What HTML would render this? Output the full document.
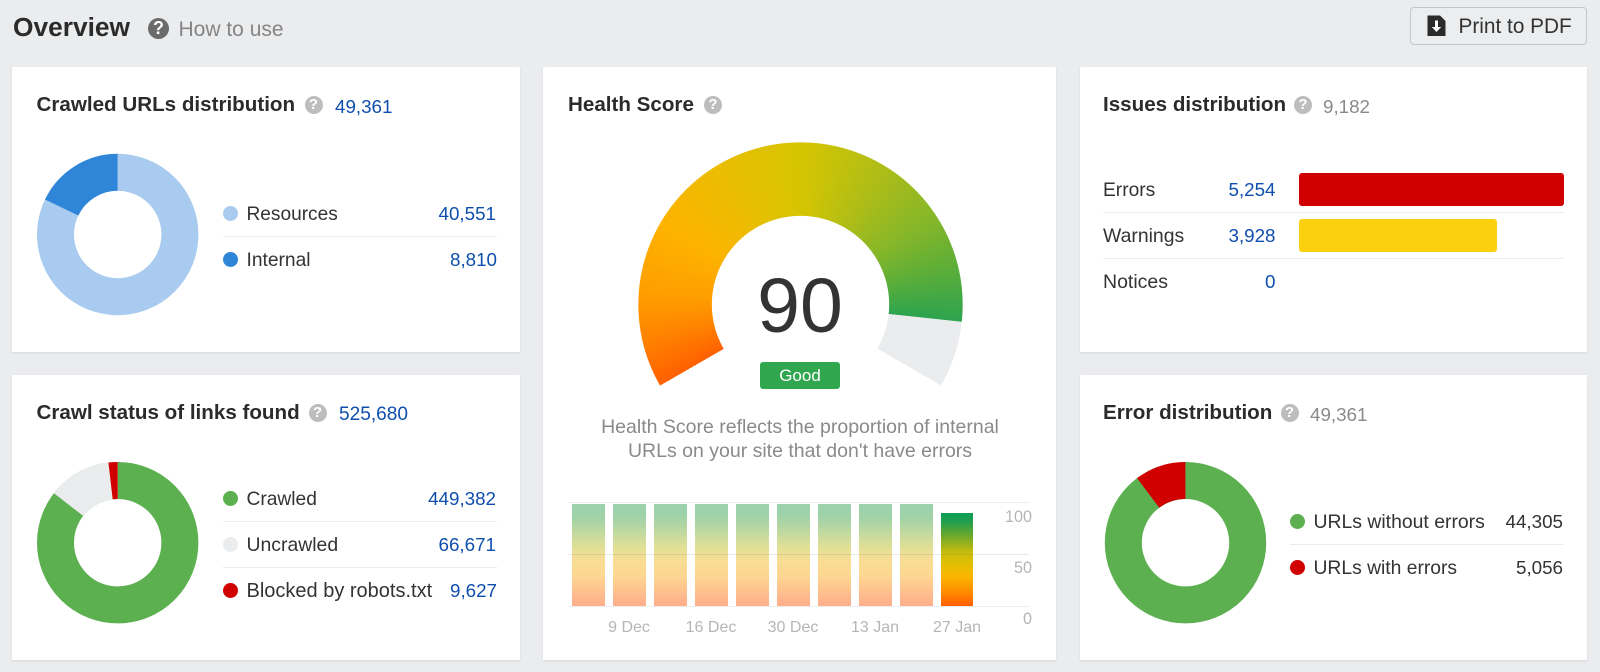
<!DOCTYPE html>
<html lang="en"><head><meta charset="utf-8"><title>Overview</title>
<style>
*{box-sizing:border-box}
html,body{margin:0;padding:0}
body{width:1600px;height:672px;background:#ebecee;position:relative;overflow:hidden;font-family:"Liberation Sans",sans-serif;color:#333;filter:blur(.3px)}
.a{position:absolute;white-space:nowrap;line-height:30px;height:30px}
.card{position:absolute;background:#fff;box-shadow:0 1px 2px rgba(0,0,0,.09)}
.t{font-weight:bold;font-size:20.6px;color:#2b2b2b}
.l{font-size:19.2px;color:#333}
.n{font-size:18.8px;color:#0e4fae;text-align:right}
.g{font-size:18.8px;color:#8a8a8a}
.k{font-size:18.8px;color:#333;text-align:right}
.q{position:absolute;width:18px;height:18px;border-radius:50%;background:#bdbdbd;color:#fff;font-weight:bold;font-size:15px;line-height:18px;text-align:center}
.d{position:absolute;width:15px;height:15px;border-radius:50%}
.ln{position:absolute;height:1px;background:#ebecee}
.bar{position:absolute;width:32.5px;top:504px;height:102.5px;background:linear-gradient(#9bd1ad 0%,#9fd2a8 12%,#e0e096 42%,#f9dd94 55%,#fdd691 70%,#feb28c 95%,#feae8a 100%)}
.x{font-size:16px;color:#b5b5b5;text-align:center;width:80px}
.y{font-size:16.2px;color:#b5b5b5;text-align:right;width:40px}
svg{position:absolute;left:0;top:0}
</style></head><body>
<div class="a" style="left:13px;top:12px;font-size:26.3px;font-weight:bold;color:#2b2b2b">Overview</div>
<div class="q" style="left:148px;top:18px;width:21px;height:21px;line-height:21px;font-size:18px;background:#6b6b6b">?</div>
<div class="a" style="left:178.500px;top:14.500px;font-size:21px;color:#858585">How to use</div>
<div style="position:absolute;left:1410px;top:7px;width:177px;height:38px;border:1px solid #c4c6c8;border-radius:4px;background:#ecedef"></div>
<div class="a" style="left:1458.500px;top:12px;font-size:20.800px;color:#333">Print to PDF</div>

<div class="card" style="left:12px;top:67px;width:508px;height:285px"></div>
<div class="card" style="left:12px;top:375px;width:508px;height:285px"></div>
<div class="card" style="left:543px;top:67px;width:513px;height:593px"></div>
<div class="card" style="left:1080px;top:67px;width:507px;height:285px"></div>
<div class="card" style="left:1080px;top:375px;width:507px;height:285px"></div>

<!-- gauge -->
<div style="position:absolute;left:637.500px;top:141.500px;width:325px;height:325px;border-radius:50%;
background:conic-gradient(from 240deg,#ff6000 0deg,#ff8400 18deg,#ff9e00 34deg,#fdb300 60deg,#e6bf02 95deg,#d4c502 122deg,#b0bd16 150deg,#83b62a 178deg,#5dae38 196deg,#2da44e 216deg,#ebecee 216.200deg,#ebecee 239.800deg,transparent 240deg);
-webkit-mask:radial-gradient(circle closest-side,transparent 54.400%,#000 54.700%,#000 99.600%,transparent 100%);mask:radial-gradient(circle closest-side,transparent 54.400%,#000 54.700%,#000 99.600%,transparent 100%)"></div>

<svg width="1600" height="672" viewBox="0 0 1600 672" fill="none">
<circle cx="117.700" cy="234.500" r="62.200" stroke="#a8cbef" stroke-width="37"/>
<circle cx="117.700" cy="234.500" r="62.200" stroke="#2f86d9" stroke-width="37" pathLength="100" stroke-dasharray="17.850 100" transform="rotate(-154.300 117.700 234.500)"/>
<circle cx="117.700" cy="542.700" r="62.200" stroke="#5cb050" stroke-width="37"/>
<circle cx="117.700" cy="542.700" r="62.200" stroke="#ebecee" stroke-width="37" pathLength="100" stroke-dasharray="14.510 100" transform="rotate(-142.200 117.700 542.700)"/>
<circle cx="117.700" cy="542.700" r="62.200" stroke="#d00000" stroke-width="37" pathLength="100" stroke-dasharray="1.830 100" transform="rotate(-96.600 117.700 542.700)"/>
<circle cx="1185.500" cy="542.700" r="62.200" stroke="#5cb050" stroke-width="37"/>
<circle cx="1185.500" cy="542.700" r="62.200" stroke="#d00000" stroke-width="37" pathLength="100" stroke-dasharray="10.240 100" transform="rotate(-126.900 1185.500 542.700)"/>
<path d="M1427.500 15.500h12.500l5.500 5.500v15h-18z" fill="#2b2b2b"/>
<path d="M1435 20.500h3v6.500h3.200l-4.700 5-4.700-5h3.200z" fill="#fff"/>
</svg>

<!-- card 1 -->
<div class="a t" style="left:36.500px;top:90px">Crawled URLs distribution</div>
<div class="q" style="left:304.500px;top:96px">?</div>
<div class="a n" style="left:335px;top:91.500px">49,361</div>
<div class="d" style="left:222.500px;top:206px;background:#a8cbef"></div>
<div class="a l" style="left:246.500px;top:199.500px;font-size:19.100px">Resources</div>
<div class="a n" style="right:1104px;top:198.500px">40,551</div>
<div class="ln" style="left:222.500px;top:236px;width:274px"></div>
<div class="d" style="left:222.500px;top:252px;background:#2f86d9"></div>
<div class="a l" style="left:246.500px;top:245.500px">Internal</div>
<div class="a n" style="right:1103px;top:244.500px">8,810</div>

<!-- card 2 -->
<div class="a t" style="left:36.500px;top:398px">Crawl status of links found</div>
<div class="q" style="left:308.500px;top:403.500px">?</div>
<div class="a n" style="left:339px;top:399.500px;font-size:19.100px">525,680</div>
<div class="d" style="left:222.500px;top:491px;background:#5cb050"></div>
<div class="a l" style="left:246.500px;top:485px">Crawled</div>
<div class="a n" style="right:1104px;top:484px">449,382</div>
<div class="ln" style="left:222.500px;top:521px;width:274px"></div>
<div class="d" style="left:222.500px;top:537px;background:#ebecee"></div>
<div class="a l" style="left:246.500px;top:530px;font-size:19.400px">Uncrawled</div>
<div class="a n" style="right:1104px;top:530px">66,671</div>
<div class="ln" style="left:222.500px;top:567px;width:274px"></div>
<div class="d" style="left:222.500px;top:583px;background:#d00000"></div>
<div class="a l" style="left:246.500px;top:576px;font-size:20px">Blocked by robots.txt</div>
<div class="a n" style="right:1103px;top:576px">9,627</div>

<!-- health -->
<div class="a t" style="left:568px;top:90px">Health Score</div>
<div class="q" style="left:704px;top:96px">?</div>
<div class="a" style="left:700px;width:200px;text-align:center;top:263px;height:86px;line-height:86px;font-size:77px;color:#333">90</div>
<div style="position:absolute;left:760px;top:362px;width:80px;height:27px;border-radius:3px;background:#30a64e;color:#fff;text-align:center;font-size:17px;line-height:27px">Good</div>
<div class="a g" style="left:550px;width:500px;text-align:center;top:411.500px;font-size:19.500px">Health Score reflects the proportion of internal</div>
<div class="a g" style="left:550px;width:500px;text-align:center;top:435.500px;font-size:19.500px">URLs on your site that don't have errors</div>

<div class="ln" style="left:568px;top:502px;width:461px"></div>
<div class="bar" style="left:572px"></div>
<div class="bar" style="left:613px"></div>
<div class="bar" style="left:654px"></div>
<div class="bar" style="left:695px"></div>
<div class="bar" style="left:736px"></div>
<div class="bar" style="left:777px"></div>
<div class="bar" style="left:818px"></div>
<div class="bar" style="left:859px"></div>
<div class="bar" style="left:900px"></div>
<div class="bar" style="left:940.700px;top:513.300px;height:93.200px;background:linear-gradient(#0f9f57 0%,#1a9e50 8%,#6aa92d 24%,#c5bb0c 42%,#e0bf05 54%,#fbb600 68%,#ff8c00 85%,#ff5f00 100%)"></div>
<div class="ln" style="left:568px;top:554px;width:461px;background:rgba(120,120,100,.16)"></div>
<div class="ln" style="left:568px;top:606px;width:461px"></div>
<div class="a y" style="left:992px;top:501.500px">100</div>
<div class="a y" style="left:992px;top:553px">50</div>
<div class="a y" style="left:992px;top:604px">0</div>
<div class="a x" style="left:589px;top:612.500px">9 Dec</div>
<div class="a x" style="left:671px;top:612.500px">16 Dec</div>
<div class="a x" style="left:753px;top:612.500px">30 Dec</div>
<div class="a x" style="left:835px;top:612.500px">13 Jan</div>
<div class="a x" style="left:917px;top:612.500px">27 Jan</div>

<!-- issues -->
<div class="a t" style="left:1103px;top:90px">Issues distribution</div>
<div class="q" style="left:1294px;top:96px">?</div>
<div class="a g" style="left:1323px;top:91.500px">9,182</div>
<div class="a l" style="left:1103px;top:176px">Errors</div>
<div class="a n" style="right:324.500px;top:175px">5,254</div>
<div style="position:absolute;left:1299px;top:172.500px;width:265px;height:33px;border-radius:3px;background:#d00000"></div>
<div class="ln" style="left:1103px;top:212px;width:461px"></div>
<div class="a l" style="left:1103px;top:220.500px;font-size:19.400px">Warnings</div>
<div class="a n" style="right:324.500px;top:221px">3,928</div>
<div style="position:absolute;left:1299px;top:218.500px;width:198px;height:33px;border-radius:3px;background:#fbd00e"></div>
<div class="ln" style="left:1103px;top:258px;width:461px"></div>
<div class="a l" style="left:1103px;top:267px;font-size:19.500px">Notices</div>
<div class="a n" style="right:324.500px;top:267px">0</div>

<!-- error -->
<div class="a t" style="left:1103px;top:398px">Error distribution</div>
<div class="q" style="left:1280.500px;top:403.500px">?</div>
<div class="a g" style="left:1310px;top:399.500px">49,361</div>
<div class="d" style="left:1289.500px;top:514px;background:#5cb050"></div>
<div class="a l" style="left:1313.500px;top:507px;font-size:19.400px">URLs without errors</div>
<div class="a k" style="right:37px;top:507px">44,305</div>
<div class="ln" style="left:1290px;top:544px;width:274px"></div>
<div class="d" style="left:1289.500px;top:560px;background:#d00000"></div>
<div class="a l" style="left:1313.500px;top:554px;font-size:19.300px">URLs with errors</div>
<div class="a k" style="right:37px;top:553px">5,056</div>
</body></html>
